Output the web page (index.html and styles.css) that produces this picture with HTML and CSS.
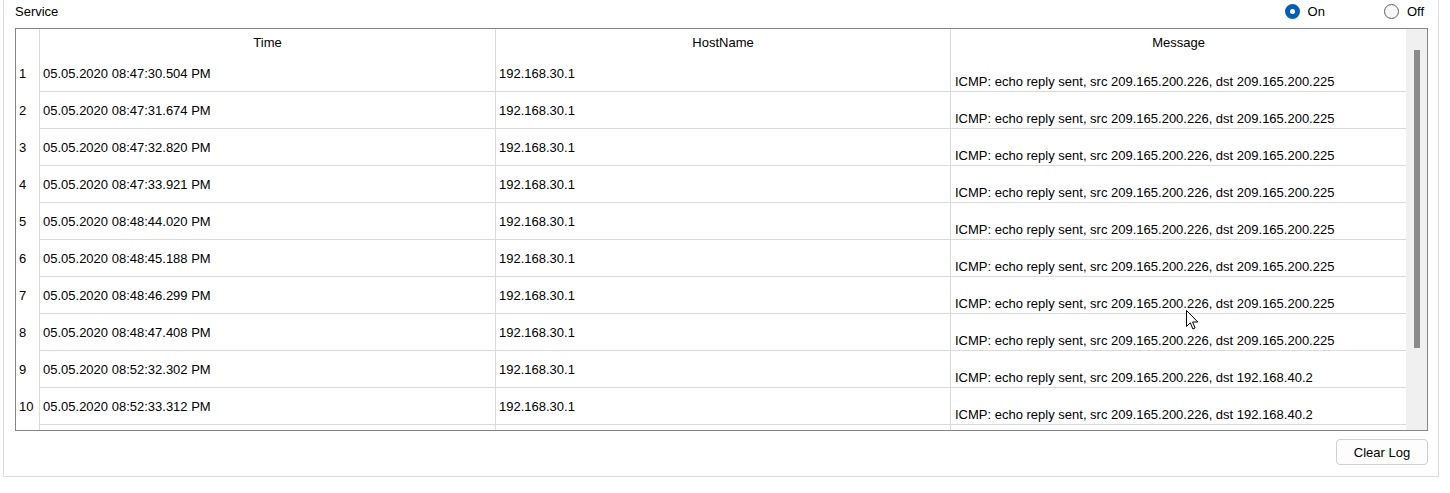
FILE: index.html
```html
<!DOCTYPE html>
<html>
<head>
<meta charset="utf-8">
<link rel="stylesheet" href="styles.css">
</head>
<body>
<div class="panel">
  <div class="topbar">
    <span class="title">Service</span>
    <div class="radios">
      <label class="radio"><span class="dot on"></span><span>On</span></label>
      <label class="radio"><span class="dot"></span><span>Off</span></label>
    </div>
  </div>
  <div class="table">
    <div class="data">
      <div class="row head">
        <div class="c rh"></div>
        <div class="c hc">Time</div>
        <div class="c hc">HostName</div>
        <div class="c hc last">Message</div>
      </div>
      <div class="row"><div class="c rh">1</div><div class="c d">05.05.2020 08:47:30.504 PM</div><div class="c d">192.168.30.1</div><div class="c d msg last">ICMP: echo reply sent, src 209.165.200.226, dst 209.165.200.225</div></div>
      <div class="row"><div class="c rh">2</div><div class="c d">05.05.2020 08:47:31.674 PM</div><div class="c d">192.168.30.1</div><div class="c d msg last">ICMP: echo reply sent, src 209.165.200.226, dst 209.165.200.225</div></div>
      <div class="row"><div class="c rh">3</div><div class="c d">05.05.2020 08:47:32.820 PM</div><div class="c d">192.168.30.1</div><div class="c d msg last">ICMP: echo reply sent, src 209.165.200.226, dst 209.165.200.225</div></div>
      <div class="row"><div class="c rh">4</div><div class="c d">05.05.2020 08:47:33.921 PM</div><div class="c d">192.168.30.1</div><div class="c d msg last">ICMP: echo reply sent, src 209.165.200.226, dst 209.165.200.225</div></div>
      <div class="row"><div class="c rh">5</div><div class="c d">05.05.2020 08:48:44.020 PM</div><div class="c d">192.168.30.1</div><div class="c d msg last">ICMP: echo reply sent, src 209.165.200.226, dst 209.165.200.225</div></div>
      <div class="row"><div class="c rh">6</div><div class="c d">05.05.2020 08:48:45.188 PM</div><div class="c d">192.168.30.1</div><div class="c d msg last">ICMP: echo reply sent, src 209.165.200.226, dst 209.165.200.225</div></div>
      <div class="row"><div class="c rh">7</div><div class="c d">05.05.2020 08:48:46.299 PM</div><div class="c d">192.168.30.1</div><div class="c d msg last">ICMP: echo reply sent, src 209.165.200.226, dst 209.165.200.225</div></div>
      <div class="row"><div class="c rh">8</div><div class="c d">05.05.2020 08:48:47.408 PM</div><div class="c d">192.168.30.1</div><div class="c d msg last">ICMP: echo reply sent, src 209.165.200.226, dst 209.165.200.225</div></div>
      <div class="row"><div class="c rh">9</div><div class="c d">05.05.2020 08:52:32.302 PM</div><div class="c d">192.168.30.1</div><div class="c d msg last">ICMP: echo reply sent, src 209.165.200.226, dst 192.168.40.2</div></div>
      <div class="row"><div class="c rh">10</div><div class="c d">05.05.2020 08:52:33.312 PM</div><div class="c d">192.168.30.1</div><div class="c d msg last">ICMP: echo reply sent, src 209.165.200.226, dst 192.168.40.2</div></div>
      <div class="row"><div class="c rh"></div><div class="c d"></div><div class="c d"></div><div class="c d msg last"></div></div>
    </div>
    <div class="scrollbar"><div class="thumb"></div></div>
  </div>
  <div class="actions">
    <button class="btn">Clear Log</button>
  </div>
</div>
<svg class="cursor" width="13" height="21" viewBox="0 0 13 21"><path d="M0.5 0.5 L0.5 16.5 L4.3 12.8 L6.9 19 L9.1 18 L6.6 12 L11.8 12 Z" fill="#fff" stroke="#000" stroke-width="1" stroke-linejoin="miter"/></svg>
</body>
</html>
```
FILE: styles.css
```css
* { box-sizing: border-box; }
html, body { margin: 0; padding: 0; background: #fff; }
body {
  font-family: "Liberation Sans", Arial, sans-serif;
  font-size: 13px;
  color: #000;
  position: relative;
  height: 493px;
  overflow: hidden;
}
.panel {
  margin-left: 3px;
  width: 1436px;
  height: 477px;
  border: 1px solid #dcdcdc;
  border-top: none;
  padding: 0 10px 0 11px;
}
.topbar {
  height: 22px;
  display: flex;
  align-items: center;
  justify-content: space-between;
  margin-bottom: 6px;
  line-height: 15px;
}
.radios {
  display: flex;
  align-items: center;
  gap: 59px;
  margin-right: 4px;
}
.radio {
  display: flex;
  align-items: center;
  gap: 8px;
}
.dot {
  width: 15px;
  height: 15px;
  border-radius: 50%;
  border: 1px solid #5f5f5f;
  background: #f6f6f6;
}
.dot.on {
  border: 5px solid #005fb8;
  background: #fff;
}
.table {
  display: flex;
  width: 1413px;
  height: 403px;
  border: 1px solid #858585;
}
.data {
  flex: 1;
  overflow: hidden;
}
.row {
  display: grid;
  grid-template-columns: 24px 456px 455px 455px;
  height: 37px;
}
.row.head { height: 26px; }
.c {
  border-right: 1px solid #dadada;
  display: flex;
  align-items: center;
  line-height: 15px;
  white-space: nowrap;
  overflow: hidden;
}
.c.last { border-right: none; }
.rh { padding-left: 3px; }
.hc { justify-content: center; }
.d {
  padding-left: 3px;
  border-bottom: 1px solid #dadada;
}
.msg {
  padding-left: 4px;
  align-items: flex-end;
  padding-bottom: 2px;
}
.scrollbar {
  width: 21px;
  background: #f0f0f0;
  padding: 21px 0 0 8px;
}
.thumb {
  width: 6px;
  height: 298px;
  background: #8a8a8a;
}
.actions {
  display: flex;
  justify-content: flex-end;
  margin-top: 8px;
  width: 1413px;
}
.btn {
  width: 92px;
  height: 26px;
  border: 1px solid #d0d0d0;
  border-radius: 4px;
  background: #fdfdfd;
  font-family: "Liberation Sans", Arial, sans-serif;
  font-size: 13px;
  color: #000;
  padding: 0;
}
.cursor {
  position: absolute;
  left: 1186px;
  top: 310px;
}
```
